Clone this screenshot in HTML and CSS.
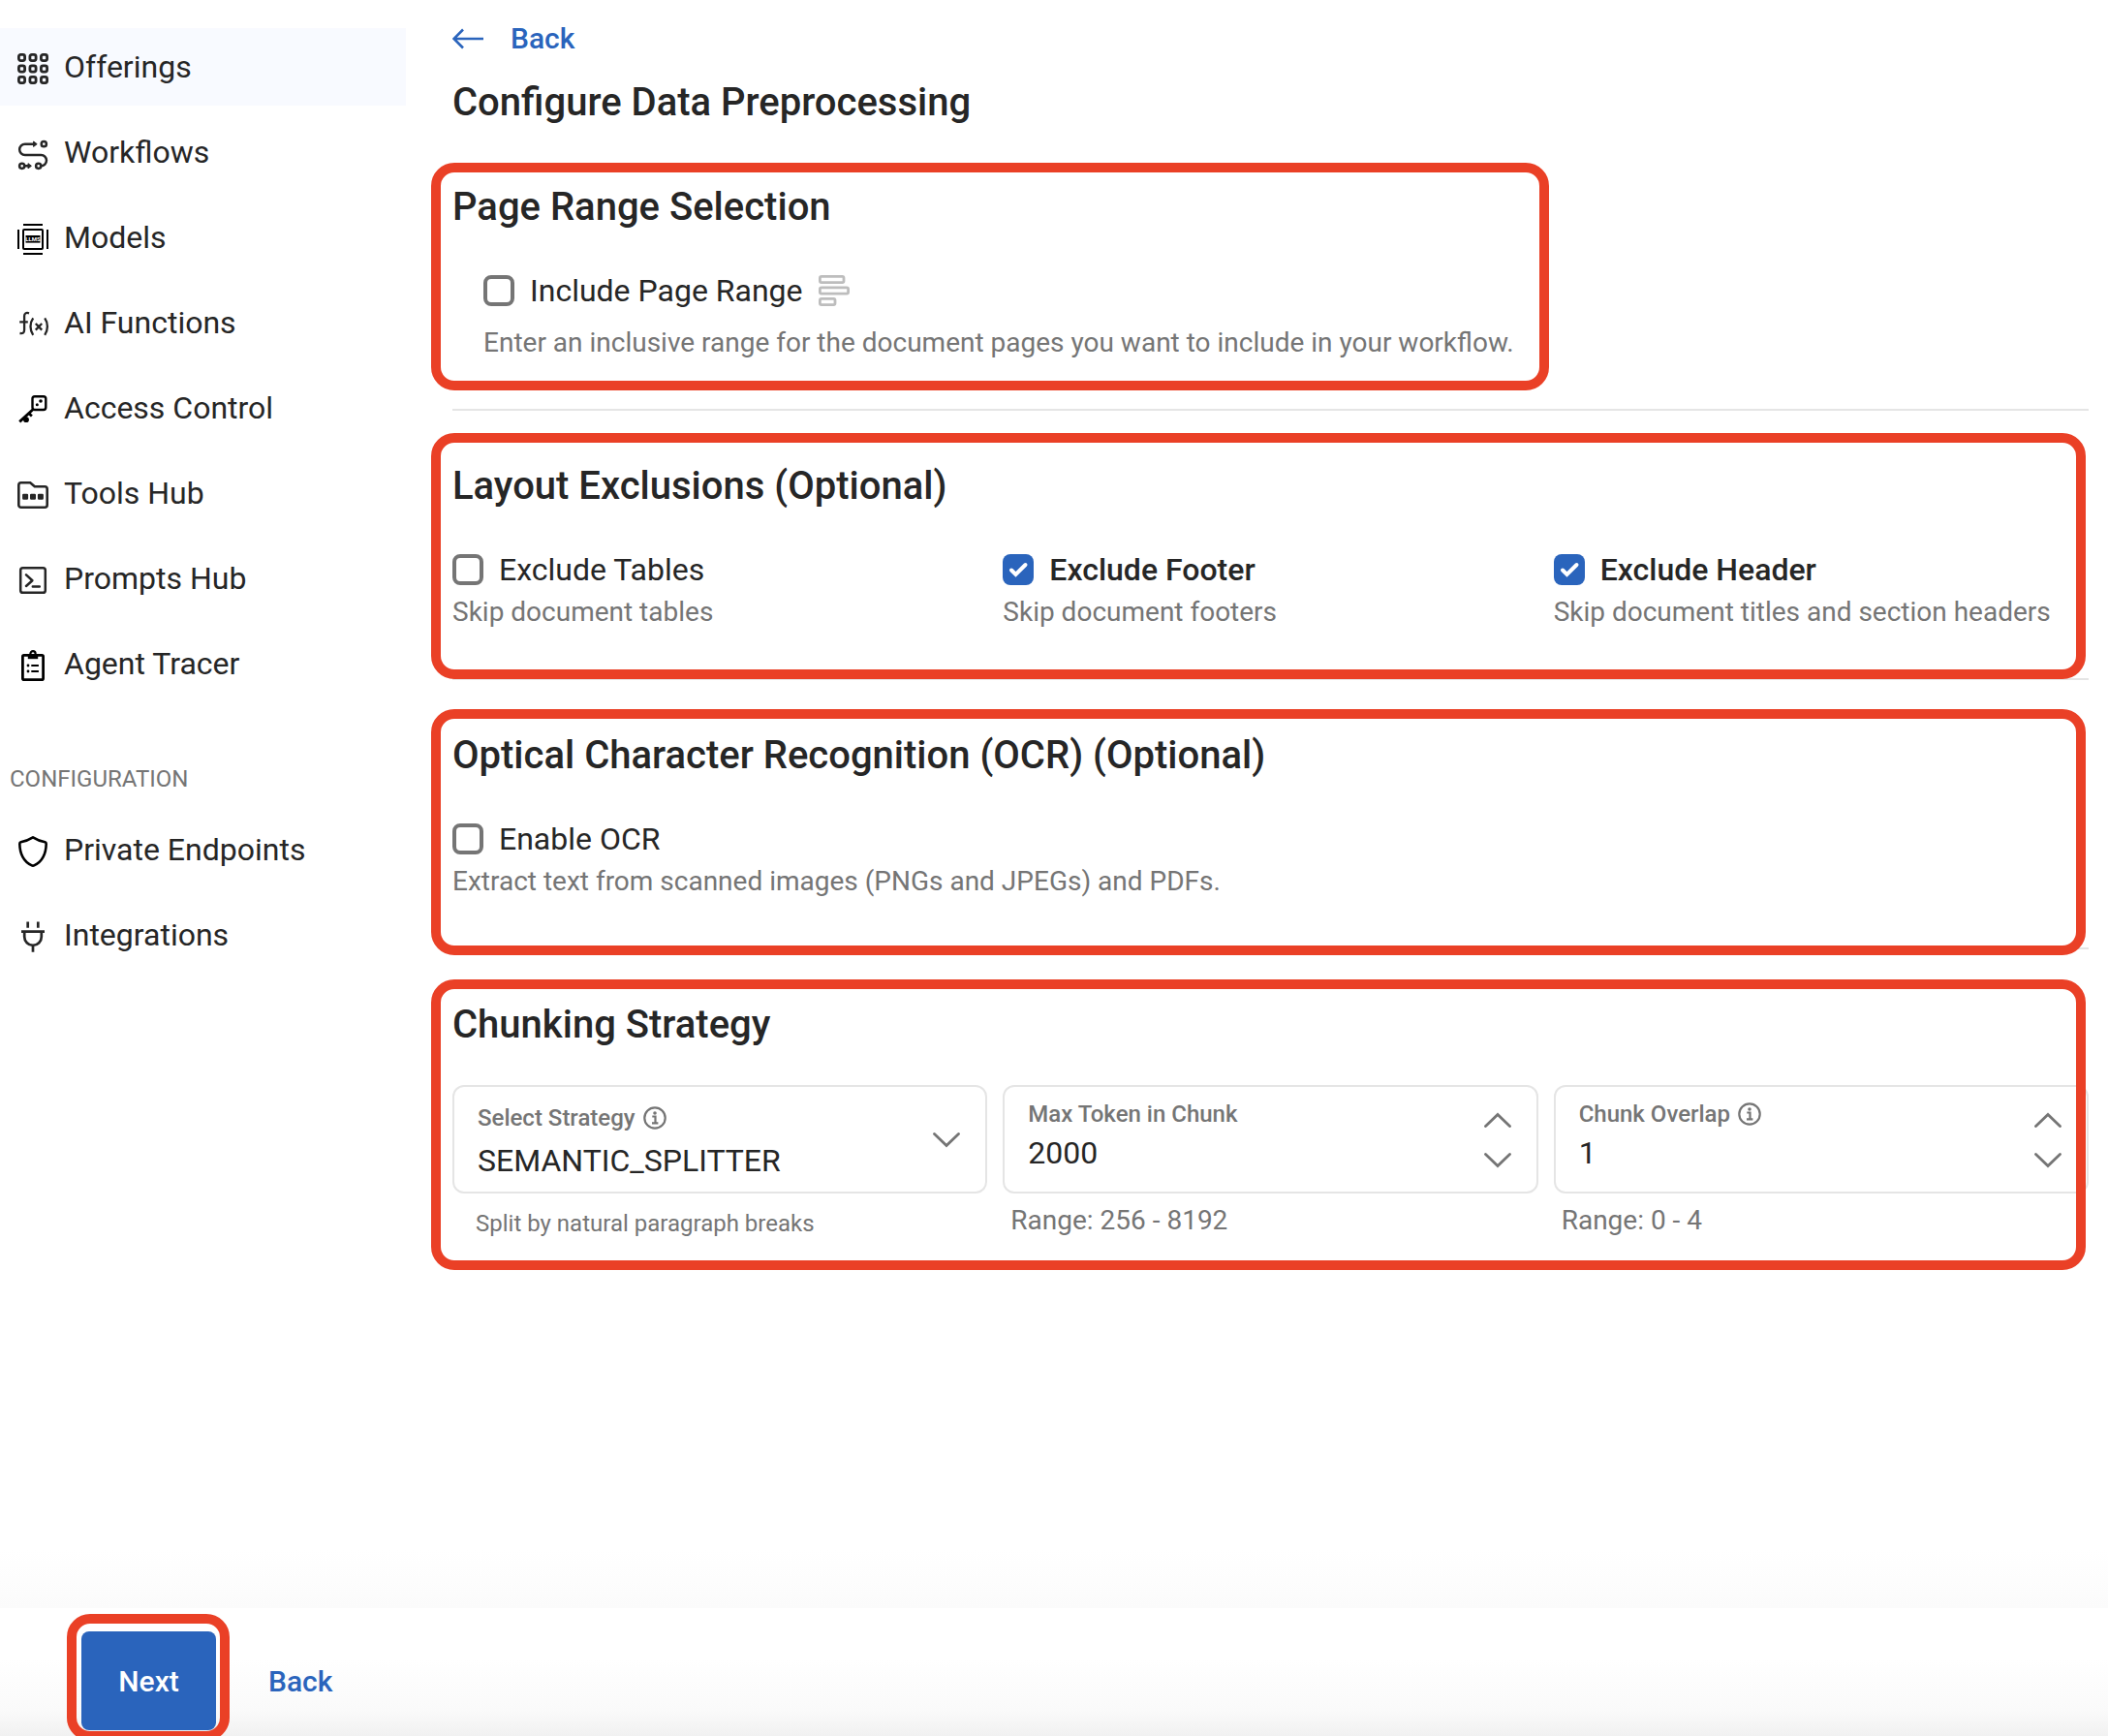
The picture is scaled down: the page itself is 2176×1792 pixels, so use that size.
FILE: index.html
```html
<!DOCTYPE html>
<html lang="en">
<head>
<meta charset="utf-8">
<meta name="viewport" content="width=device-width, initial-scale=1">
<title>Configure Data Preprocessing</title>
<link rel="stylesheet" href="styles.css">
</head>
<body class="page">
<div class="layout">
  <nav class="sidebar" aria-label="Main">
    <ul class="nav-list">
      <li><a class="nav-item nav-item--active" href="#offerings" aria-current="page">
        <svg class="nav-icon" viewBox="0 0 32 32" fill="none" stroke="currentColor" stroke-width="2.8" aria-hidden="true"><rect x="1.4" y="1.4" width="6.2" height="6.2" rx="2"/><rect x="12.9" y="1.4" width="6.2" height="6.2" rx="2"/><rect x="24.4" y="1.4" width="6.2" height="6.2" rx="2"/><rect x="1.4" y="12.9" width="6.2" height="6.2" rx="2"/><rect x="12.9" y="12.9" width="6.2" height="6.2" rx="2"/><rect x="24.4" y="12.9" width="6.2" height="6.2" rx="2"/><rect x="1.4" y="24.4" width="6.2" height="6.2" rx="2"/><rect x="12.9" y="24.4" width="6.2" height="6.2" rx="2"/><rect x="24.4" y="24.4" width="6.2" height="6.2" rx="2"/></svg>
        Offerings</a></li>
      <li><a class="nav-item" href="#workflows">
        <svg class="nav-icon" viewBox="0 0 32 32" fill="none" stroke="currentColor" stroke-width="2.5" aria-hidden="true"><circle cx="27.3" cy="5.7" r="2.6"/><circle cx="4.7" cy="28.3" r="2.6"/><circle cx="21.7" cy="28.3" r="2.6"/><path d="M17 5.7H7.8a5.6 5.6 0 0 0 0 11.3h16.6a5.6 5.6 0 0 1 0 11.2M7.5 28.3H11"/><path d="M16.6 3v5.4l3.6-2.7zM11 25.7v5.2l3.4-2.6z" fill="currentColor" stroke-width="1" stroke-linejoin="round"/></svg>
        Workflows</a></li>
      <li><a class="nav-item" href="#models">
        <svg class="nav-icon nav-icon--black" viewBox="0 0 32 32" fill="none" stroke="currentColor" stroke-width="2" aria-hidden="true"><path d="M6 1h20M6 31h20M1 6v20M31 6v20"/><rect x="6" y="6" width="20" height="20" rx="1"/><path d="M8.5 12h15v7.6h-15z" fill="currentColor" stroke="none"/><text class="nav-icon-text" x="16" y="18.2" text-anchor="middle">LLMS</text></svg>
        Models</a></li>
      <li><a class="nav-item" href="#functions">
        <svg class="nav-icon" viewBox="0 0 32 32" fill="none" stroke="currentColor" stroke-width="2.3" aria-hidden="true"><path d="M12 4.3c-3-1-4.9.2-4.9 3v14.300c0 3-1.500 4-4.600 3.400M2.200 13.400h8.600M16.200 9.400c-3.600 5-3.600 12.400 0 17.400M28.200 9.400c3.600 5 3.600 12.400 0 17.400M18.800 15l6.400 6.600M25.200 15l-6.400 6.600"/></svg>
        AI Functions</a></li>
      <li><a class="nav-item" href="#access">
        <svg class="nav-icon nav-icon--black" viewBox="0 0 32 32" fill="none" stroke="currentColor" stroke-width="2.4" aria-hidden="true"><rect x="15.5" y="2.2" width="13.8" height="13.8" rx="2.4"/><path d="M16.5 15.2L2.2 28.4M11.5 19.5l3.4 3" stroke-width="2.8"/><circle cx="24" cy="7" r="1.8" fill="currentColor" stroke="none"/><circle cx="20.3" cy="10.7" r="1.5" fill="currentColor" stroke="none"/><circle cx="9" cy="26.2" r="2.9" fill="currentColor" stroke="none"/></svg>
        Access Control</a></li>
      <li><a class="nav-item" href="#tools">
        <svg class="nav-icon" viewBox="0 0 32 32" fill="none" stroke="currentColor" stroke-width="2.6" aria-hidden="true"><path d="M1.3 26.2V5.8a2.5 2.5 0 0 1 2.5-2.5h9.4l4.6 4h10.4a2.5 2.5 0 0 1 2.5 2.5v16.4a2.5 2.5 0 0 1-2.5 2.5H3.8a2.5 2.5 0 0 1-2.5-2.5z"/><path d="M6.3 14.8h3.6a1.2 1.2 0 0 1 1.2 1.2v3.6a1.2 1.2 0 0 1-1.2 1.2H6.3a1.2 1.2 0 0 1-1.2-1.2V16a1.2 1.2 0 0 1 1.2-1.2zM14.2 14.8h3.6A1.2 1.2 0 0 1 19 16v3.6a1.2 1.2 0 0 1-1.2 1.2h-3.6a1.2 1.2 0 0 1-1.2-1.2V16a1.2 1.2 0 0 1 1.2-1.2zM22.1 14.8h3.6a1.2 1.2 0 0 1 1.2 1.2v3.6a1.2 1.2 0 0 1-1.2 1.2h-3.6a1.2 1.2 0 0 1-1.2-1.2V16a1.2 1.2 0 0 1 1.2-1.2z" fill="currentColor" stroke="none"/></svg>
        Tools Hub</a></li>
      <li><a class="nav-item" href="#prompts">
        <svg class="nav-icon" viewBox="0 0 32 32" fill="none" stroke="currentColor" stroke-width="2.5" stroke-linecap="round" stroke-linejoin="round" aria-hidden="true"><rect x="3.2" y="3.2" width="25.6" height="25.6" rx="2.4"/><path d="M9 10.4l6.4 5.8L9 22M15.8 22.6h7"/></svg>
        Prompts Hub</a></li>
      <li><a class="nav-item" href="#tracer">
        <svg class="nav-icon nav-icon--black" viewBox="0 0 32 32" fill="none" stroke="currentColor" stroke-width="2.8" aria-hidden="true"><rect x="5.4" y="5.4" width="21.2" height="25.2" rx="1.4"/><path d="M10.8 4h10.4v5.2H10.8z" fill="currentColor" stroke="none"/><circle cx="16" cy="3.8" r="2.6" stroke-width="2.2"/><path d="M14.3 16h7.6M14.3 22h7.6" stroke-width="2"/><circle cx="11" cy="16" r="1.4" fill="currentColor" stroke="none"/><circle cx="11" cy="22" r="1.4" fill="currentColor" stroke="none"/></svg>
        Agent Tracer</a></li>
    </ul>
    <h2 class="nav-heading">CONFIGURATION</h2>
    <ul class="nav-list">
      <li><a class="nav-item" href="#endpoints">
        <svg class="nav-icon nav-icon--black" viewBox="0 0 32 32" fill="none" stroke="currentColor" stroke-width="2.6" stroke-linejoin="round" aria-hidden="true"><path d="M16 1.4C12 3.9 8 5.5 3.5 6.3c-.9.2-1.2.8-1.2 1.7C2.5 18.5 7 26.5 14.4 30.2q1.6.8 3.2 0C25 26.5 29.5 18.5 29.7 8c0-.9-.3-1.5-1.2-1.7C24 5.5 20 3.9 16 1.4z"/></svg>
        Private Endpoints</a></li>
      <li><a class="nav-item" href="#integrations">
        <svg class="nav-icon" viewBox="0 0 32 32" fill="none" stroke="currentColor" stroke-width="2.7" aria-hidden="true"><path d="M10.7.6v6.2M21.3.6v6.2M4 10.6h24M7.2 11v5a8.8 8.8 0 0 0 17.6 0v-5M16 25v6.8"/></svg>
        Integrations</a></li>
    </ul>
  </nav>

  <main class="content">
    <a class="back-link" href="#back">
      <svg class="back-arrow" viewBox="0 0 32 32" fill="none" stroke="currentColor" stroke-width="2.6" aria-hidden="true"><path d="M32 16H1.5M11 6.500L1.500 16l9.500 9.500"/></svg>
      Back</a>
    <h1 class="title">Configure Data Preprocessing</h1>

    <section class="section section--first">
      <div class="page-range">
        <h2 class="title section-title">Page Range Selection</h2>
        <div class="indent">
          <div class="check-row">
            <input class="checkbox" type="checkbox" id="page-range" aria-describedby="page-range-help">
            <label for="page-range">Include Page Range</label>
            <svg class="range-icon" viewBox="0 0 32 32" fill="none" stroke="currentColor" stroke-width="2.8" aria-hidden="true"><rect x="1.4" y="1.4" width="24.6" height="6.2" rx="1.6"/><rect x="1.4" y="12.9" width="29.2" height="6.2" rx="1.6"/><rect x="1.4" y="24.4" width="15.6" height="6.2" rx="1.6"/></svg>
          </div>
          <p class="help help--spaced" id="page-range-help">Enter an inclusive range for the document pages you want to include in your workflow.</p>
        </div>
        <span class="callout callout--range"></span>
      </div>
    </section>

    <section class="section">
      <h2 class="title section-title">Layout Exclusions (Optional)</h2>
      <div class="columns">
        <div>
          <div class="check-row">
            <input class="checkbox" type="checkbox" id="tables" aria-describedby="tables-help">
            <label for="tables">Exclude Tables</label>
          </div>
          <p class="help" id="tables-help">Skip document tables</p>
        </div>
        <div>
          <div class="check-row">
            <input class="checkbox" type="checkbox" id="footer" aria-describedby="footer-help" checked>
            <label for="footer">Exclude Footer</label>
          </div>
          <p class="help" id="footer-help">Skip document footers</p>
        </div>
        <div>
          <div class="check-row">
            <input class="checkbox" type="checkbox" id="header" aria-describedby="header-help" checked>
            <label for="header">Exclude Header</label>
          </div>
          <p class="help" id="header-help">Skip document titles and section headers</p>
        </div>
      </div>
      <span class="callout callout--exclusions"></span>
    </section>

    <section class="section">
      <h2 class="title section-title">Optical Character Recognition (OCR) (Optional)</h2>
      <div class="check-row">
        <input class="checkbox" type="checkbox" id="ocr" aria-describedby="ocr-help">
        <label for="ocr">Enable OCR</label>
      </div>
      <p class="help" id="ocr-help">Extract text from scanned images (PNGs and JPEGs) and PDFs.</p>
      <span class="callout callout--ocr"></span>
    </section>

    <section class="section section--last">
      <h2 class="title section-title">Chunking Strategy</h2>
      <div class="columns">
        <div>
          <div class="field field--select">
            <div class="field-body">
              <div class="field-label">
                <label for="strategy">Select Strategy</label>
                <svg class="info-icon" viewBox="0 0 24 24" fill="none" stroke="currentColor" stroke-width="2.2" aria-hidden="true"><circle cx="12" cy="12" r="10.7"/><path d="M9.300 10.500h3.200v6.800M9 17.300h6.400"/><circle cx="12" cy="7" r="1.8" fill="currentColor" stroke="none"/></svg>
              </div>
              <select class="field-value" id="strategy"><option>SEMANTIC_SPLITTER</option></select>
            </div>
            <svg class="chevron" viewBox="0 0 28 28" fill="none" stroke="currentColor" stroke-width="2.8" stroke-linecap="round" aria-hidden="true"><path d="M1.500 8.500L14 20.500 26.500 8.500"/></svg>
          </div>
          <p class="hint hint--small">Split by natural paragraph breaks</p>
        </div>
        <div>
          <div class="field">
            <div class="field-body">
              <div class="field-label"><label for="max-token">Max Token in Chunk</label></div>
              <input class="field-value" id="max-token" type="text" inputmode="numeric" value="2000">
            </div>
            <div class="stepper">
              <button class="step" type="button" aria-label="Increase max token"><svg class="chevron" viewBox="0 0 28 28" fill="none" stroke="currentColor" stroke-width="2.8" stroke-linecap="round" aria-hidden="true"><path d="M1.500 20.500L14 8.500l12.500 12"/></svg></button>
              <button class="step" type="button" aria-label="Decrease max token"><svg class="chevron" viewBox="0 0 28 28" fill="none" stroke="currentColor" stroke-width="2.8" stroke-linecap="round" aria-hidden="true"><path d="M1.500 8.500L14 20.500 26.500 8.500"/></svg></button>
            </div>
          </div>
          <p class="hint">Range: 256 - 8192</p>
        </div>
        <div>
          <div class="field">
            <div class="field-body">
              <div class="field-label">
                <label for="overlap">Chunk Overlap</label>
                <svg class="info-icon" viewBox="0 0 24 24" fill="none" stroke="currentColor" stroke-width="2.2" aria-hidden="true"><circle cx="12" cy="12" r="10.7"/><path d="M9.300 10.500h3.200v6.800M9 17.300h6.400"/><circle cx="12" cy="7" r="1.8" fill="currentColor" stroke="none"/></svg>
              </div>
              <input class="field-value" id="overlap" type="text" inputmode="numeric" value="1">
            </div>
            <div class="stepper">
              <button class="step" type="button" aria-label="Increase chunk overlap"><svg class="chevron" viewBox="0 0 28 28" fill="none" stroke="currentColor" stroke-width="2.8" stroke-linecap="round" aria-hidden="true"><path d="M1.500 20.500L14 8.500l12.500 12"/></svg></button>
              <button class="step" type="button" aria-label="Decrease chunk overlap"><svg class="chevron" viewBox="0 0 28 28" fill="none" stroke="currentColor" stroke-width="2.8" stroke-linecap="round" aria-hidden="true"><path d="M1.500 8.500L14 20.500 26.500 8.500"/></svg></button>
            </div>
          </div>
          <p class="hint">Range: 0 - 4</p>
        </div>
      </div>
      <span class="callout callout--chunking"></span>
    </section>
  </main>
</div>

<footer class="actions">
  <div class="next-wrap">
    <button class="button button--primary" type="button">Next</button>
    <span class="callout callout--next"></span>
  </div>
  <button class="button" type="button">Back</button>
</footer>
</body>
</html>
```
FILE: styles.css
```css
:root {
  --text: #262626;
  --muted: #757575;
  --blue: #2a64bc;
  --line: #e5e5e5;
  --red: #ea4026;
}

* {
  box-sizing: border-box;
}

.page {
  margin: 0;
  min-height: 100vh;
  display: flex;
  flex-direction: column;
  background: #fff;
  color: var(--text);
  font-family: Roboto, "Liberation Sans", sans-serif;
  font-size: 32px;
  line-height: 48px;
}

.layout {
  flex: 1;
  display: flex;
  background: linear-gradient(to bottom, #fff, #fbfbfb) bottom / 100% 60px no-repeat;
}

/* Sidebar */
.sidebar {
  flex: 0 0 419px;
  padding-top: 29px;
}

.nav-list {
  display: grid;
  gap: 8px;
  margin: 0;
  padding: 0;
  list-style: none;
}

.nav-item {
  display: flex;
  align-items: center;
  gap: 16px;
  height: 80px;
  padding-left: 18px;
  color: var(--text);
  text-decoration: none;
}

.nav-item--active {
  background: #f8faff;
}

.nav-icon {
  flex: none;
  width: 32px;
  height: 32px;
  margin-top: 4px;
  overflow: visible;
}

.nav-icon--black {
  color: #000;
}

.nav-icon-text {
  fill: #fff;
  stroke: none;
  font-size: 6px;
  font-weight: 700;
}

.nav-heading {
  margin: 63px 0 17px;
  padding-left: 10px;
  color: var(--muted);
  font-size: 24px;
  font-weight: 400;
  line-height: 32px;
}

/* Content */
.content {
  flex: 1;
  min-width: 0;
  padding: 20px 20px 0 48px;
}

.back-link {
  display: flex;
  align-items: center;
  gap: 28px;
  width: fit-content;
  color: var(--blue);
  font-size: 30px;
  font-weight: 500;
  line-height: 40px;
  text-decoration: none;
}

.back-arrow {
  width: 32px;
  height: 32px;
}

.title {
  margin: 20px 0 56px;
  font-size: 40px;
  font-weight: 500;
  line-height: 52px;
}

.section {
  position: relative;
  padding: 52px 0 48px;
  border-bottom: 2px solid var(--line);
}

.section--first {
  padding-top: 0;
}

.section--last {
  padding-bottom: 28px;
  border-bottom: 0;
}

.section-title {
  margin: 0 0 36px;
}

.page-range {
  position: relative;
  width: fit-content;
}

.indent {
  padding-left: 32px;
}

.columns {
  display: grid;
  grid-template-columns: repeat(3, minmax(0, 1fr));
  gap: 16px;
}

.check-row {
  display: flex;
  align-items: center;
  gap: 16px;
}

.checkbox {
  appearance: none;
  flex: none;
  width: 32px;
  height: 32px;
  margin: 0;
  border: 4px solid var(--muted);
  border-radius: 8px;
}

.checkbox:checked {
  border: 0;
  background: var(--blue) url("data:image/svg+xml,%3Csvg xmlns='http://www.w3.org/2000/svg' viewBox='0 0 32 32'%3E%3Cpath d='M9 16.5l4.500 4.500L23.500 11' fill='none' stroke='white' stroke-width='4' stroke-linecap='round'/%3E%3C/svg%3E") center / 32px 32px;
}

.checkbox:checked + label {
  font-weight: 500;
}

.range-icon {
  width: 32px;
  height: 32px;
  color: #bdbdbd;
}

.help {
  margin: 0;
  color: var(--muted);
  font-size: 28px;
  line-height: 40px;
}

.help--spaced {
  margin-top: 10px;
}

/* Fields */
.field {
  display: flex;
  align-items: center;
  height: 112px;
  padding: 0 26px 0 24px;
  border: 2px solid var(--line);
  border-radius: 12px;
  color: var(--muted);
}

.field-body {
  flex: 1;
  min-width: 0;
  align-self: flex-start;
  padding-top: 12px;
}

.field--select .field-body {
  padding-top: 16px;
}

.field-label {
  display: flex;
  align-items: center;
  gap: 8px;
  font-size: 24px;
  font-weight: 500;
  line-height: 32px;
}

.info-icon {
  width: 24px;
  height: 24px;
}

.field-value {
  display: block;
  appearance: none;
  width: 100%;
  height: 40px;
  margin: 4px 0 0;
  padding: 0;
  border: 0;
  background: none;
  color: var(--text);
  font: inherit;
  font-size: 32px;
  line-height: 40px;
}

.field--select .field-value {
  margin-top: 8px;
}

.chevron {
  display: block;
  flex: none;
  width: 28px;
  height: 28px;
}

.step {
  display: flex;
  align-items: center;
  height: 41px;
  padding: 0;
  border: 0;
  background: none;
  color: inherit;
}

.hint {
  margin: 8px 0 0;
  padding-left: 8px;
  color: var(--muted);
  font-size: 28px;
  line-height: 40px;
}

.hint--small {
  margin-top: 11px;
  padding-left: 24px;
  font-size: 24px;
}

/* Highlight frames drawn over the sections */
.callout {
  position: absolute;
  z-index: 1;
  border: 10px solid var(--red);
  border-radius: 24px;
  pointer-events: none;
}

.callout--range {
  inset: -20px -36px -29px -22px;
}

.callout--exclusions {
  inset: 23px 3px -1px -22px;
}

.callout--ocr {
  inset: 30px 3px -8px -22px;
}

.callout--chunking {
  inset: 31px 3px 0 -22px;
}

.callout--next {
  inset: -18px -14px -11px -15px;
}

/* Bottom bar */
.actions {
  display: flex;
  align-items: flex-start;
  gap: 30px;
  height: 132px;
  padding: 24px 84px 0;
  overflow: hidden;
  background: linear-gradient(to bottom, #fff 40%, #fafafa 80%, #f1f1f1);
}

.next-wrap {
  position: relative;
}

.button {
  height: 102px;
  padding: 0 24px;
  border: 0;
  border-radius: 8px;
  background: none;
  color: var(--blue);
  font: 500 30px Roboto, "Liberation Sans", sans-serif;
}

.button--primary {
  min-width: 139px;
  background: var(--blue);
  color: #fff;
}
```
